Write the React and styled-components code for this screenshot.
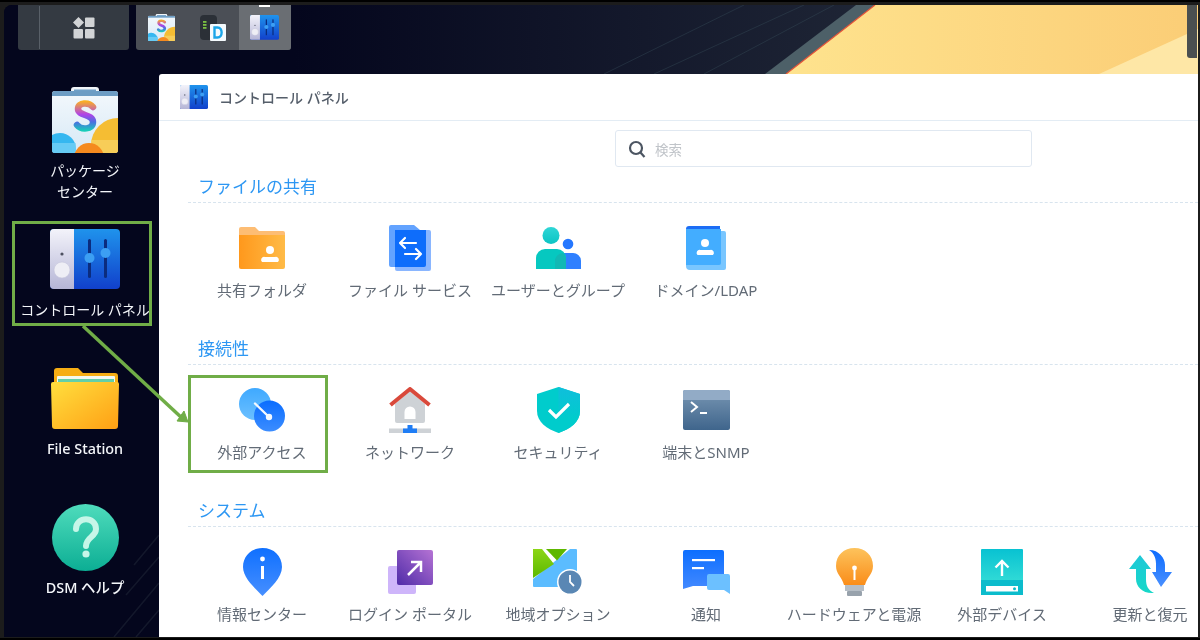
import React from "react";
import styled, { createGlobalStyle } from "styled-components";

const GlobalStyle = createGlobalStyle`
  html, body {
    margin: 0;
    padding: 0;
    background: #111;
  }
  * {
    box-sizing: border-box;
  }
`;

const FONT = `"Noto Sans", "Noto Sans CJK JP", sans-serif`;
const GREEN = "#70ad47";

/* icons */

function PackageIcon({ size = 66 }) {
  return (
    <svg width={size} height={size} viewBox="0 0 66 66">
      <defs>
        <linearGradient id="pkgS" gradientUnits="userSpaceOnUse" x1="0" y1="14" x2="0" y2="44">
          <stop offset="0" stopColor="#fbb11f" />
          <stop offset="0.45" stopColor="#b044e8" />
          <stop offset="0.7" stopColor="#4a70e0" />
          <stop offset="1" stopColor="#17d0b8" />
        </linearGradient>
        <linearGradient id="pkgBody" x1="0" y1="0" x2="0" y2="1">
          <stop offset="0" stopColor="#f3f8fc" />
          <stop offset="1" stopColor="#d7e9f6" />
        </linearGradient>
        <clipPath id="pkgClip">
          <rect x="0" y="4" width="66" height="62" rx="3" />
        </clipPath>
      </defs>
      <path d="M19 6V3a3 3 0 0 1 3-3h22a3 3 0 0 1 3 3v3z" fill="#f1f5f8" />
      <rect x="22" y="2.5" width="22" height="4" fill="#6f9fc6" />
      <g clipPath="url(#pkgClip)">
        <rect x="0" y="4" width="66" height="62" fill="url(#pkgBody)" />
        <rect x="0" y="4" width="66" height="5" fill="#6d9dc4" />
        <circle cx="66" cy="58" r="27" fill="#f5bd33" />
        <rect x="39" y="53" width="27" height="13" fill="#f8d468" opacity="0.7" />
        <circle cx="8" cy="62" r="16" fill="#35b7f0" />
        <rect x="0" y="56" width="24" height="10" fill="#7cd3f6" opacity="0.7" />
        <circle cx="37" cy="71" r="15" fill="#f58a1f" />
      </g>
      <path
        d="M41 20C37 15 26 15 26 22C26 29 41 27 41 35C41 43 29 43 25 38"
        fill="none"
        stroke="url(#pkgS)"
        strokeWidth="6.5"
        strokeLinecap="round"
      />
    </svg>
  );
}

function ControlPanelIcon({ width = 70 }) {
  return (
    <svg width={width} height={(width * 60) / 70} viewBox="0 0 70 60">
      <defs>
        <linearGradient id="cpLeft" x1="0" y1="0" x2="0" y2="1">
          <stop offset="0" stopColor="#f3f3fa" />
          <stop offset="1" stopColor="#b5b5d6" />
        </linearGradient>
        <linearGradient id="cpRight" x1="0" y1="0" x2="0" y2="1">
          <stop offset="0" stopColor="#1f93ec" />
          <stop offset="1" stopColor="#1140cb" />
        </linearGradient>
      </defs>
      <rect x="0" y="0" width="70" height="60" rx="4" fill="url(#cpRight)" />
      <path d="M4 0H24V60H4a4 4 0 0 1-4-4V4a4 4 0 0 1 4-4z" fill="url(#cpLeft)" />
      <circle cx="12" cy="25" r="1.6" fill="#4d5060" />
      <circle cx="12" cy="41" r="8" fill="#eeeef5" stroke="#c4c4dc" strokeWidth="0.6" />
      <rect x="38" y="10" width="3" height="39" rx="1.5" fill="#0b2c7e" />
      <rect x="54" y="10" width="3" height="39" rx="1.5" fill="#0b2c7e" />
      <circle cx="39.5" cy="29" r="5" fill="#3c9ff3" />
      <circle cx="55.5" cy="24" r="5" fill="#3c9ff3" />
    </svg>
  );
}

function DriveIcon() {
  return (
    <svg width="26" height="26" viewBox="0 0 26 26">
      <rect x="0" y="0" width="17" height="25" rx="4" fill="#2b3037" />
      <rect x="3" y="6" width="3.5" height="1.8" fill="#7bc043" />
      <rect x="3" y="9" width="3.5" height="1.8" fill="#7bc043" />
      <rect x="3" y="12" width="3.5" height="1.8" fill="#7bc043" />
      <rect x="10" y="9" width="16" height="17" rx="1" fill="#f4fafd" />
      <path
        d="M14.5 12.5H17.5C23 12.5 23 22.5 17.5 22.5H14.5z"
        fill="none"
        stroke="#1aa5e8"
        strokeWidth="2.4"
      />
    </svg>
  );
}

function FolderIcon() {
  return (
    <svg width="68" height="61" viewBox="0 0 68 61">
      <defs>
        <linearGradient id="fsFront" x1="0" y1="0" x2="1" y2="1">
          <stop offset="0" stopColor="#ffdf3e" />
          <stop offset="1" stopColor="#ff9f14" />
        </linearGradient>
      </defs>
      <path d="M3 3a3 3 0 0 1 3-3H27l5 5H64a3 3 0 0 1 3 3V30H3z" fill="#f6ad14" />
      <rect x="6" y="8" width="58" height="16" rx="1" fill="#f4f8ee" />
      <rect x="7" y="11" width="56" height="14" fill="#62cfa8" />
      <path d="M2 14H66a2 2 0 0 1 2 2L67 58a3 3 0 0 1-3 3H4a3 3 0 0 1-3-3L0 16a2 2 0 0 1 2-2z" fill="url(#fsFront)" />
    </svg>
  );
}

function HelpIcon() {
  return (
    <svg width="67" height="67" viewBox="0 0 67 67">
      <defs>
        <linearGradient id="helpBg" x1="0" y1="0" x2="0" y2="1">
          <stop offset="0" stopColor="#4fdcbc" />
          <stop offset="1" stopColor="#0cae94" />
        </linearGradient>
      </defs>
      <circle cx="33.5" cy="33.5" r="33.5" fill="url(#helpBg)" />
      <path
        d="M24 25C24 12 44 12 44 25C44 33 34 33 34 42"
        fill="none"
        stroke="#c6f6e8"
        strokeWidth="6"
        strokeLinecap="round"
      />
      <circle cx="34" cy="50" r="3.6" fill="#c6f6e8" />
    </svg>
  );
}

function TaskGridIcon() {
  return (
    <svg width="22" height="22" viewBox="0 0 22 22">
      <path d="M5.5 0L11 5.5L5.5 11L0 5.5z" fill="#d2d4d6" />
      <rect x="12" y="0.5" width="9.5" height="9.5" rx="1" fill="#d2d4d6" />
      <rect x="0.5" y="12" width="9.5" height="9.5" rx="1" fill="#d2d4d6" />
      <rect x="12" y="12" width="9.5" height="9.5" rx="1" fill="#d2d4d6" />
    </svg>
  );
}

function SharedFolderIcon() {
  return (
    <svg width="46" height="42" viewBox="0 0 46 42">
      <defs>
        <linearGradient id="sfBody" x1="0" y1="0" x2="1" y2="0">
          <stop offset="0" stopColor="#ff981c" />
          <stop offset="1" stopColor="#ffbb47" />
        </linearGradient>
      </defs>
      <path d="M0 2a2 2 0 0 1 2-2H16l4 4H44a2 2 0 0 1 2 2V12H0z" fill="#fdbd74" />
      <path d="M0 8H46V40a2 2 0 0 1-2 2H2a2 2 0 0 1-2-2z" fill="url(#sfBody)" />
      <circle cx="31" cy="23" r="4" fill="#fff" />
      <path d="M23 35a3 3 0 0 1 3-5H36a3 3 0 0 1 3 5z" fill="#fff" />
    </svg>
  );
}

function FileServiceIcon() {
  return (
    <svg width="42" height="46" viewBox="0 0 42 46">
      <path d="M2 0H25L31 5H37V42H2a2 2 0 0 1-2-2V2a2 2 0 0 1 2-2z" fill="#63a3ff" />
      <path d="M6 5H40a2 2 0 0 1 2 2V44a2 2 0 0 1-2 2H8a2 2 0 0 1-2-2z" fill="#8ab6ff" />
      <path d="M6 5H37V40a2 2 0 0 1-2 2H6z" fill="#0e6dfb" />
      <g fill="none" stroke="#fff" strokeWidth="2.2" strokeLinecap="round" strokeLinejoin="round">
        <path d="M11 18H27M16 13L11 18L16 23" />
        <path d="M16 29H32M27 24L32 29L27 34" />
      </g>
    </svg>
  );
}

function UsersIcon() {
  return (
    <svg width="45" height="42" viewBox="0 0 45 42">
      <defs>
        <linearGradient id="usHead" x1="0" y1="0" x2="0" y2="1">
          <stop offset="0" stopColor="#2fd6d6" />
          <stop offset="1" stopColor="#0cc4c4" />
        </linearGradient>
      </defs>
      <circle cx="32" cy="17" r="5.3" fill="#2477ff" />
      <path d="M22 42V26H36a8 8 0 0 1 9 8V42z" fill="#2f80ff" />
      <circle cx="15" cy="8.5" r="8.500" fill="url(#usHead)" />
      <path d="M0 42V31a9 9 0 0 1 9-9H21a9 9 0 0 1 9 9V42z" fill="#06c8c0" />
      <path d="M30 31V42H19V35a8 8 0 0 1 8-9a9 9 0 0 1 3 5z" fill="#12b8b4" />
    </svg>
  );
}

function DomainIcon() {
  return (
    <svg width="40" height="44" viewBox="0 0 40 44">
      <path d="M3 0H34V4H0V3a3 3 0 0 1 3-3z" fill="#1c6df5" />
      <path d="M0 3H35V5H38a2 2 0 0 1 2 2V42a2 2 0 0 1-2 2H4a4 4 0 0 1-4-4z" fill="#79c6ff" />
      <path d="M0 3H35V37a2 2 0 0 1-2 2H0z" fill="#43adff" />
      <circle cx="19" cy="17" r="4" fill="#fff" />
      <path d="M11.5 29a3 3 0 0 1 3-5H24a3 3 0 0 1 3 5z" fill="#fff" />
    </svg>
  );
}

function ExternalIcon() {
  return (
    <svg width="46" height="44" viewBox="0 0 46 44">
      <defs>
        <linearGradient id="exA" x1="0" y1="0" x2="0" y2="1">
          <stop offset="0" stopColor="#3fa9ff" />
          <stop offset="1" stopColor="#6cc0ff" />
        </linearGradient>
        <linearGradient id="exB" x1="0" y1="0" x2="0" y2="1">
          <stop offset="0" stopColor="#0a6dff" />
          <stop offset="1" stopColor="#3c8dff" />
        </linearGradient>
      </defs>
      <circle cx="16" cy="16" r="16" fill="url(#exA)" />
      <circle cx="30.5" cy="28" r="15.5" fill="url(#exB)" />
      <path d="M16 15.5L30 29" stroke="#f2f8ff" strokeWidth="2.4" strokeLinecap="round" />
      <circle cx="30" cy="29" r="3.2" fill="#f2f8ff" />
    </svg>
  );
}

function NetworkIcon() {
  return (
    <svg width="42" height="46" viewBox="0 0 42 46">
      <path d="M6 17L21 4L36 17V34a2 2 0 0 1-2 2H8a2 2 0 0 1-2-2z" fill="#ced2d6" />
      <path d="M1.500 18L21 2L40.500 18" fill="none" stroke="#d9493b" strokeWidth="4" strokeLinejoin="round" />
      <path d="M15.500 32V25a5.500 5.500 0 0 1 11 0V32z" fill="#fff" />
      <rect x="0" y="41.500" width="42" height="4.500" fill="#ced2d6" />
      <rect x="18.500" y="38" width="5" height="4" fill="#1f7df5" />
      <rect x="14" y="41.500" width="14" height="4.500" fill="#1f7df5" />
    </svg>
  );
}

function ShieldIcon() {
  return (
    <svg width="43" height="46" viewBox="0 0 43 46">
      <defs>
        <linearGradient id="shRight" x1="0" y1="0" x2="0" y2="1">
          <stop offset="0" stopColor="#10bedc" />
          <stop offset="0.7" stopColor="#00cccc" />
        </linearGradient>
      </defs>
      <path d="M21.500 0L43 7V24C43 35 33 42 21.500 46C10 42 0 35 0 24V7z" fill="#00cccc" />
      <path d="M21.500 0L43 7V24C43 35 33 42 21.500 46z" fill="url(#shRight)" />
      <path d="M12 23L19 30L32 17" fill="none" stroke="#fff" strokeWidth="3.200" />
    </svg>
  );
}

function TerminalIcon() {
  return (
    <svg width="47" height="40" viewBox="0 0 47 40">
      <defs>
        <linearGradient id="tmBody" x1="0" y1="0" x2="0" y2="1">
          <stop offset="0" stopColor="#7896b3" />
          <stop offset="1" stopColor="#3f658c" />
        </linearGradient>
      </defs>
      <rect width="47" height="40" rx="2" fill="url(#tmBody)" />
      <path d="M2 0H45a2 2 0 0 1 2 2V10H0V2a2 2 0 0 1 2-2z" fill="#92abc6" />
      <path d="M8 12L14 17L8 22" fill="none" stroke="#fff" strokeWidth="2" />
      <path d="M17 23H24" stroke="#fff" strokeWidth="2" />
    </svg>
  );
}

function InfoIcon() {
  return (
    <svg width="39" height="48" viewBox="0 0 39 48">
      <defs>
        <linearGradient id="inBody" x1="0" y1="0" x2="0" y2="1">
          <stop offset="0" stopColor="#0f70ff" />
          <stop offset="1" stopColor="#478fff" />
        </linearGradient>
      </defs>
      <path d="M19.500 0C31 0 39 8 39 19C39 30 27 40 19.500 48C12 40 0 30 0 19C0 8 8 0 19.500 0z" fill="url(#inBody)" />
      <circle cx="19.500" cy="11" r="2.400" fill="#fff" />
      <rect x="18" y="18" width="3" height="13" fill="#fff" />
    </svg>
  );
}

function LoginIcon() {
  return (
    <svg width="45" height="44" viewBox="0 0 45 44">
      <defs>
        <linearGradient id="lgBody" x1="0" y1="1" x2="1" y2="0">
          <stop offset="0" stopColor="#4f2ba8" />
          <stop offset="1" stopColor="#b573d4" />
        </linearGradient>
      </defs>
      <rect x="0" y="16" width="28" height="28" rx="2" fill="#ceb5fa" />
      <rect x="9" y="0" width="36" height="35" rx="2" fill="url(#lgBody)" />
      <path d="M20 25L33 12M23 12H33V22" fill="none" stroke="#fff" strokeWidth="2.500" />
    </svg>
  );
}

function RegionIcon() {
  return (
    <svg width="50" height="46" viewBox="0 0 50 46">
      <defs>
        <linearGradient id="rgLeft" x1="0" y1="0" x2="0" y2="1">
          <stop offset="0" stopColor="#8cd616" />
          <stop offset="1" stopColor="#5cb800" />
        </linearGradient>
      </defs>
      <path d="M1 0H43a1 1 0 0 1 1 1V37a1 1 0 0 1-1 1H1a1 1 0 0 1-1-1V1a1 1 0 0 1 1-1z" fill="#5bbcff" />
      <path d="M0 0H37L0 30z" fill="#fff" />
      <path d="M0 0H9L21 15L0 29z" fill="url(#rgLeft)" />
      <path d="M13 0H34L24 11.500z" fill="#5eb700" />
      <circle cx="37" cy="33" r="13" fill="#fff" />
      <circle cx="37" cy="33" r="11.500" fill="#5a87b4" />
      <path d="M37 26V33L41 37" fill="none" stroke="#fff" strokeWidth="1.800" />
    </svg>
  );
}

function NotifyIcon() {
  return (
    <svg width="47" height="44" viewBox="0 0 47 44">
      <defs>
        <linearGradient id="noBody" x1="0" y1="0" x2="0" y2="1">
          <stop offset="0" stopColor="#0c6eff" />
          <stop offset="1" stopColor="#4389ff" />
        </linearGradient>
      </defs>
      <path d="M2 0H39a2 2 0 0 1 2 2V36H10L0 39V2a2 2 0 0 1 2-2z" fill="url(#noBody)" />
      <rect x="9" y="9" width="23" height="2.200" fill="#fff" />
      <rect x="9" y="17" width="12" height="2.200" fill="#fff" />
      <path d="M26 24H45a2 2 0 0 1 2 2V44L41 40H26a2 2 0 0 1-2-2V26a2 2 0 0 1 2-2z" fill="#6cc0ff" />
    </svg>
  );
}

function BulbIcon() {
  return (
    <svg width="37" height="48" viewBox="0 0 37 48">
      <defs>
        <linearGradient id="buBody" x1="0" y1="0" x2="0" y2="1">
          <stop offset="0" stopColor="#fdc35c" />
          <stop offset="1" stopColor="#fa8d1a" />
        </linearGradient>
      </defs>
      <path d="M18.500 0C29 0 37 7 37 18C37 26 31 29 29 37H8C6 29 0 26 0 18C0 7 8 0 18.500 0z" fill="url(#buBody)" />
      <circle cx="18.500" cy="20" r="2.400" fill="#fff" />
      <rect x="17.500" y="20" width="2" height="12" fill="#fff" />
      <rect x="9" y="37" width="19" height="6" fill="#b6bec6" />
      <rect x="11" y="43" width="15" height="5" rx="1" fill="#98a2ac" />
    </svg>
  );
}

function DeviceIcon() {
  return (
    <svg width="42" height="46" viewBox="0 0 42 46">
      <defs>
        <linearGradient id="deTop" x1="0" y1="0" x2="0" y2="1">
          <stop offset="0" stopColor="#08c2d2" />
          <stop offset="1" stopColor="#30dad6" />
        </linearGradient>
      </defs>
      <rect width="42" height="32" rx="1" fill="url(#deTop)" />
      <rect y="31" width="42" height="15" fill="#0cbccc" />
      <path d="M21 27V12M14.500 18.500L21 12L27.500 18.500" fill="none" stroke="#fff" strokeWidth="2.400" />
      <rect x="5" y="37" width="32" height="5.500" fill="#fff" />
      <circle cx="33.500" cy="39.700" r="1.500" fill="#0cbccc" />
    </svg>
  );
}

function UpdateIcon() {
  return (
    <svg width="43" height="44" viewBox="0 0 43 44">
      <defs>
        <linearGradient id="upA" x1="0" y1="0" x2="0" y2="1">
          <stop offset="0" stopColor="#1fc8d8" />
          <stop offset="1" stopColor="#16d8c8" />
        </linearGradient>
        <linearGradient id="upB" x1="0" y1="0" x2="0" y2="1">
          <stop offset="0" stopColor="#0c6cff" />
          <stop offset="1" stopColor="#4a90ff" />
        </linearGradient>
      </defs>
      <path d="M20 0C30 0 36 8 36 15V22H43L32 37L23 22H27V14C27 8 25 3 20 0z" fill="url(#upB)" />
      <path d="M11 5L22 19H17V29C17 36 19 40 25 43C14 44 7 37 7 29V19H0z" fill="url(#upA)" />
    </svg>
  );
}

/* data */

const deskItems = [
  { icon: <PackageIcon />, label: "パッケージ\nセンター" },
  { icon: <ControlPanelIcon />, label: "コントロール パネル", marked: true },
  { icon: <FolderIcon />, label: "File Station", strong: true },
  { icon: <HelpIcon />, label: "DSM ヘルプ", strong: true },
];

const sections = [
  {
    title: "ファイルの共有",
    tiles: [
      { icon: <SharedFolderIcon />, label: "共有フォルダ" },
      { icon: <FileServiceIcon />, label: "ファイル サービス" },
      { icon: <UsersIcon />, label: "ユーザーとグループ" },
      { icon: <DomainIcon />, label: "ドメイン/LDAP" },
    ],
  },
  {
    title: "接続性",
    tiles: [
      { icon: <ExternalIcon />, label: "外部アクセス", marked: true },
      { icon: <NetworkIcon />, label: "ネットワーク" },
      { icon: <ShieldIcon />, label: "セキュリティ" },
      { icon: <TerminalIcon />, label: "端末とSNMP" },
    ],
  },
  {
    title: "システム",
    tiles: [
      { icon: <InfoIcon />, label: "情報センター" },
      { icon: <LoginIcon />, label: "ログイン ポータル" },
      { icon: <RegionIcon />, label: "地域オプション" },
      { icon: <NotifyIcon />, label: "通知" },
      { icon: <BulbIcon />, label: "ハードウェアと電源" },
      { icon: <DeviceIcon />, label: "外部デバイス" },
      { icon: <UpdateIcon />, label: "更新と復元" },
    ],
  },
];

export default function App() {
  return (
    <>
      <GlobalStyle />
      <Frame>
        <Desktop>
          <Wallpaper viewBox="0 0 1194 632" preserveAspectRatio="none">
            <defs>
              <linearGradient id="sand" x1="0" y1="0" x2="1" y2="0">
                <stop offset="0" stopColor="#fee38e" />
                <stop offset="1" stopColor="#fbcd76" />
              </linearGradient>
              <linearGradient id="dusk" x1="0" y1="0" x2="1" y2="0">
                <stop offset="0" stopColor="#04061d" />
                <stop offset="1" stopColor="#1f2636" />
              </linearGradient>
            </defs>
            <rect width="1194" height="632" fill="#04061d" />
            <rect x="290" width="590" height="69" fill="url(#dusk)" />
            <g stroke="#3c5560" strokeWidth="1" fill="none" opacity="0.35">
              <path d="M600 69L740 0" />
              <path d="M650 69L800 0" />
              <path d="M700 69L830 0" />
            </g>
            <path d="M761 69L852 0H871L782 69z" fill="#4d6068" />
            <path d="M782 69L871 0H1194V69z" fill="url(#sand)" />
            <path d="M782 69L871 0" stroke="#e6553a" strokeWidth="1.200" />
            <path d="M1095 69L1194 24V69z" fill="#fee7a6" />
            <g stroke="#39424e" strokeWidth="1.500" fill="none" opacity="0.3">
              <path d="M130 560L155 530" />
              <path d="M122 590L155 552" />
              <path d="M110 632L155 578" />
              <path d="M132 632L155 605" />
            </g>
          </Wallpaper>

          <Content>
            <TopBar>
              <TaskStart>
                <TaskDivider />
                <TaskGridIcon />
              </TaskStart>
              <TaskApps>
                <TaskApp>
                  <PackageIcon size={27} />
                </TaskApp>
                <TaskApp>
                  <DriveIcon />
                </TaskApp>
                <TaskApp $active>
                  <ControlPanelIcon width={29} />
                </TaskApp>
              </TaskApps>
              <Widget />
            </TopBar>

            <Body>
              <Sidebar>
                {deskItems.map((item) => (
                  <DeskItem key={item.label}>
                    {item.marked && <DeskMark />}
                    <DeskIconSlot>{item.icon}</DeskIconSlot>
                    <DeskLabel $strong={item.strong}>{item.label}</DeskLabel>
                  </DeskItem>
                ))}
              </Sidebar>

              <Window>
                <TitleBar>
                  <ControlPanelIcon width={28} />
                  <WindowTitle>コントロール パネル</WindowTitle>
                </TitleBar>
                <SearchBox>
                  <svg width="18" height="18" viewBox="0 0 18 18">
                    <circle cx="8" cy="8" r="6" fill="none" stroke="#4c5562" strokeWidth="2.200" />
                    <path d="M12.500 12.500L16.500 17" stroke="#4c5562" strokeWidth="2.200" />
                  </svg>
                  <SearchText>検索</SearchText>
                </SearchBox>
                {sections.map((section) => (
                  <Section key={section.title}>
                    <SectionTitle>{section.title}</SectionTitle>
                    <TileGrid>
                      {section.tiles.map((tile) => (
                        <Tile key={tile.label}>
                          {tile.marked && <TileMark />}
                          <TileIconSlot>{tile.icon}</TileIconSlot>
                          <TileLabel>{tile.label}</TileLabel>
                        </Tile>
                      ))}
                    </TileGrid>
                  </Section>
                ))}
              </Window>
            </Body>
          </Content>

          <Arrow width="140" height="120" viewBox="0 0 140 120">
            <path d="M13 6L113 99" fill="none" stroke={GREEN} strokeWidth="3.500" />
            <path d="M118 102L107 101L114 91z" fill={GREEN} stroke={GREEN} strokeWidth="1" />
          </Arrow>
        </Desktop>
      </Frame>
    </>
  );
}

const Frame = styled.div`
  width: 1200px;
  height: 640px;
  padding: 3px 2px 1px 4px;
  background: #1c1c1c;
  border-top: 2px solid #000;
  border-bottom: 2px solid #000;
  font-family: ${FONT};
  overflow: hidden;
  filter: blur(0.35px);
`;

const Desktop = styled.div`
  position: relative;
  height: 100%;
  border-radius: 8px 0 0 0;
  overflow: hidden;
  background: #04061d;
`;

const Wallpaper = styled.svg`
  position: absolute;
  inset: 0;
  width: 100%;
  height: 100%;
`;

const Content = styled.div`
  position: relative;
  display: flex;
  flex-direction: column;
  height: 100%;
`;

const TopBar = styled.div`
  display: flex;
  gap: 7px;
  height: 45px;
  padding-left: 14px;
  margin-bottom: 24px;
  flex-shrink: 0;
`;

const TaskStart = styled.div`
  display: flex;
  align-items: center;
  width: 111px;
  height: 45px;
  background: #343a42;
  border-radius: 0 0 3px 3px;
`;

const TaskDivider = styled.div`
  width: 1px;
  height: 43px;
  margin: 0 33px 0 21px;
  background: #596068;
`;

const TaskApps = styled.div`
  display: flex;
  height: 45px;
  background: #4b4f56;
  border-radius: 0 0 3px 3px;
  overflow: hidden;
`;

const TaskApp = styled.div`
  position: relative;
  display: flex;
  align-items: center;
  justify-content: center;
  width: 51.500px;
  background: ${(p) => (p.$active ? "#6a6e73" : "transparent")};

  &::before {
    content: "";
    display: ${(p) => (p.$active ? "block" : "none")};
    position: absolute;
    top: 0;
    left: 20px;
    width: 11px;
    height: 2px;
    background: #fff;
  }
`;

const Widget = styled.div`
  width: 10px;
  height: 53px;
  margin: 0 1px 0 auto;
  background: #4a4f50;
  border-radius: 0 0 0 3px;
`;

const Body = styled.div`
  display: flex;
  flex: 1;
  min-height: 0;
`;

const Sidebar = styled.div`
  display: grid;
  grid-auto-rows: 139px;
  width: 155px;
  padding: 12px 0 0 7px;
  flex-shrink: 0;
`;

const DeskItem = styled.div`
  position: relative;
  display: flex;
  flex-direction: column;
  align-items: center;
  width: 148px;
`;

const DeskIconSlot = styled.div`
  display: flex;
  align-items: center;
  justify-content: center;
  height: 68px;
  margin-bottom: 6px;
`;

const DeskLabel = styled.div`
  color: #f4f6fa;
  font-size: ${(p) => (p.$strong ? "14.400px" : "14px")};
  line-height: 21px;
  font-weight: ${(p) => (p.$strong ? 500 : 400)};
  text-align: center;
  white-space: pre-line;
`;

const DeskMark = styled.div`
  position: absolute;
  top: -4px;
  left: 1px;
  width: 140px;
  height: 105px;
  border: 3px solid ${GREEN};
`;

const Window = styled.div`
  flex: 1;
  min-width: 0;
  background: #fff;
  border-radius: 3px 0 0 0;
  overflow: hidden;
`;

const TitleBar = styled.div`
  display: flex;
  align-items: center;
  gap: 11px;
  height: 47px;
  padding-left: 21px;
  border-bottom: 1px solid #e3ecf4;
`;

const WindowTitle = styled.div`
  color: #555e6a;
  font-size: 14px;
  font-weight: 500;
  white-space: nowrap;
`;

const SearchBox = styled.div`
  display: flex;
  align-items: center;
  gap: 9px;
  width: 417px;
  height: 37px;
  margin: 9px 0 7px 456px;
  padding-left: 12px;
  border: 1.500px solid #e0e8f1;
  border-radius: 3px;
`;

const SearchText = styled.span`
  color: #c0c4c9;
  font-size: 13.500px;
`;

const Section = styled.div`
  height: 162px;
  padding-left: 29px;
`;

const SectionTitle = styled.div`
  height: 29px;
  padding-left: 10px;
  color: #2d97f3;
  font-size: 17px;
  line-height: 25px;
  border-bottom: 1px dashed #d8e4ee;
`;

const TileGrid = styled.div`
  display: grid;
  grid-template-columns: repeat(7, 148px);
  margin-top: 20px;
`;

const Tile = styled.div`
  position: relative;
  display: flex;
  flex-direction: column;
  align-items: center;
`;

const TileIconSlot = styled.div`
  display: flex;
  align-items: center;
  justify-content: center;
  height: 50px;
  margin-bottom: 7px;
`;

const TileLabel = styled.div`
  color: #626b76;
  font-size: 15px;
  line-height: 21px;
  white-space: nowrap;
`;

const TileMark = styled.div`
  position: absolute;
  top: -10px;
  left: 0;
  width: 140px;
  height: 98px;
  border: 3px solid ${GREEN};
`;

const Arrow = styled.svg`
  position: absolute;
  top: 315px;
  left: 66px;
  pointer-events: none;
`;
